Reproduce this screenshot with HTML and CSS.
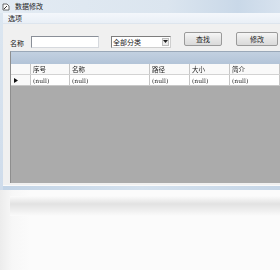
FILE: index.html
```html
<!DOCTYPE html>
<html>
<head>
<meta charset="utf-8">
<link rel="stylesheet" href="styles.css">
</head>
<body>
<div class="window">
  <div class="titlebar">
    <svg class="appicon" width="8" height="8" viewBox="0 0 8 8"><path d="M1 1h4l2 2v4H1z" fill="#fff" stroke="#444" stroke-width="0.8"/><path d="M2 6l3-3" stroke="#333" stroke-width="1"/></svg>
    <span class="title">数据修改</span>
  </div>
  <div class="frame">
    <div class="menubar"><span>选项</span></div>
    <div class="client">
      <div class="toolbar">
        <span class="label">名称</span>
        <div class="textbox"></div>
        <div class="combo"><span>全部分类</span><div class="dd"><svg width="5" height="3" viewBox="0 0 5 3"><path d="M0 0h5L2.5 3z" fill="#222"/></svg></div></div>
        <div class="btn btn-find">查找</div>
        <div class="btn btn-edit">修改</div>
      </div>
      <div class="grid">
        <div class="band"></div>
        <div class="row head">
          <div class="rh"></div>
          <div class="c c1">序号</div>
          <div class="c c2">名称</div>
          <div class="c c3">路径</div>
          <div class="c c4">大小</div>
          <div class="c c5">简介</div>
        </div>
        <div class="row data">
          <div class="rh"><svg width="4" height="5" viewBox="0 0 4 5"><path d="M0 0l4 2.5L0 5z" fill="#111"/></svg></div>
          <div class="c c1">(null)</div>
          <div class="c c2">(null)</div>
          <div class="c c3">(null)</div>
          <div class="c c4">(null)</div>
          <div class="c c5">(null)</div>
        </div>
        <div class="empty"></div>
      </div>
    </div>
  </div>
</div>
<div class="reflection"><div class="shade"></div></div>
</body>
</html>
```
FILE: styles.css
```css
html, body {
  margin: 0;
  padding: 0;
}
body {
  width: 280px;
  height: 270px;
  overflow: hidden;
  background: #fbfbfb;
  font-family: "Noto Sans CJK SC", "DejaVu Sans", sans-serif;
  color: #1a1a1a;
}
.window {
  height: 190px;
  display: flex;
  flex-direction: column;
  background: linear-gradient(#dde7f1, #cfdceb);
}
.titlebar {
  height: 13px;
  display: flex;
  align-items: center;
  padding-left: 2px;
  background: linear-gradient(90deg, #e3ebf3 0%, #dbe5ef 60%, #c9d8e8 85%, #d7e2ee 100%);
}
.appicon {
  margin-right: 5px;
}
.title {
  font-size: 7px;
  line-height: 7px;
  color: #222;
}
.frame {
  flex: 1;
  display: flex;
  flex-direction: column;
  margin-left: 3px;
  padding-bottom: 4px;
  background: linear-gradient(90deg, #c3d4e6, #d4e1ee 50%, #c6d6e7);
}
.menubar {
  height: 10px;
  display: flex;
  align-items: center;
  padding-left: 5px;
  background: linear-gradient(#f4f7fb, #e9eff6);
  border-bottom: 1px solid #dde5ee;
  font-size: 7px;
}
.client {
  flex: 1;
  display: flex;
  flex-direction: column;
  background: #f0f0f0;
  padding: 8px 0 2px 7px;
  border-bottom: 1px solid #fafafa;
}
.toolbar {
  height: 15px;
  display: flex;
  align-items: center;
  font-size: 7px;
}
.label {
  margin-top: 6px;
  width: 21px;
}
.textbox {
  width: 66px;
  height: 10px;
  margin-top: 4px;
  background: #fff;
  border: 1px solid #8a8f98;
  border-bottom-color: #d6d9de;
  border-right-color: #d6d9de;
}
.combo {
  margin-left: 12px;
  margin-top: 4px;
  width: 57px;
  height: 10px;
  background: #fff;
  border: 1px solid #7d7d7d;
  border-right-color: #cfcfcf;
  border-bottom-color: #cfcfcf;
  display: flex;
  align-items: center;
  justify-content: space-between;
  padding-left: 1px;
  line-height: 8px;
}
.dd {
  width: 7px;
  height: 8px;
  margin-right: 1px;
  background: #ececec;
  border: 1px solid #bdbdbd;
  box-sizing: border-box;
  display: flex;
  align-items: center;
  justify-content: center;
}
.btn {
  width: 38px;
  height: 14px;
  box-sizing: border-box;
  border: 1px solid #9a9a9a;
  border-radius: 2px;
  background: linear-gradient(#f6f6f6, #e6e6e6 50%, #dadada);
  display: flex;
  align-items: center;
  justify-content: center;
  margin-top: -1px;
  color: #222;
}
.btn-find {
  margin-left: 13px;
}
.btn-edit {
  margin-left: 14px;
  width: 42px;
}
.grid {
  flex: 1;
  margin-top: 4px;
  display: flex;
  flex-direction: column;
  background: #ababab;
  border-left: 1px solid #8e8e8e;
  border-top: 1px solid #9aa8b8;
  font-size: 6px;
  color: #222;
}
.band {
  height: 12px;
  background: linear-gradient(#c2d0e0, #b3c4d8);
}
.row {
  height: 10px;
  display: flex;
  background: #fff;
  filter: grayscale(1);
}
.row.head {
  background: #f9f9f9;
  border-bottom: 1px solid #d3d3d3;
  font-size: 6.5px;
}
.row.data {
  border-bottom: 1px solid #c8c8c8;
}
.rh {
  width: 20px;
  border-right: 1px solid #c6c6c6;
  display: flex;
  align-items: center;
  padding-left: 3px;
  box-sizing: border-box;
  background: #f9f9f9;
}
.c {
  border-right: 1px solid #c6c6c6;
  padding-left: 2px;
  display: flex;
  align-items: center;
  box-sizing: border-box;
  white-space: nowrap;
  color: #222;
  font-family: "DejaVu Serif", "Noto Sans CJK SC", serif;
}
.head .c {
  font-family: "Noto Sans CJK SC", sans-serif;
}
.c1 { width: 39px; }
.c2 { width: 80px; }
.c3 { width: 40px; }
.c4 { width: 40px; }
.c5 { width: 50px; }
.empty {
  flex: 1;
}
.reflection {
  height: 80px;
  background: linear-gradient(90deg, #ececec 0px, #f7f7f7 12px, #fbfbfb 30px);
  position: relative;
}
.shade {
  position: absolute;
  left: 10px;
  right: 0;
  top: 6px;
  height: 20px;
  background: linear-gradient(#fbfbfb, #e2e2e2 40%, #eeeeee 70%, #fbfbfb);
}
```
